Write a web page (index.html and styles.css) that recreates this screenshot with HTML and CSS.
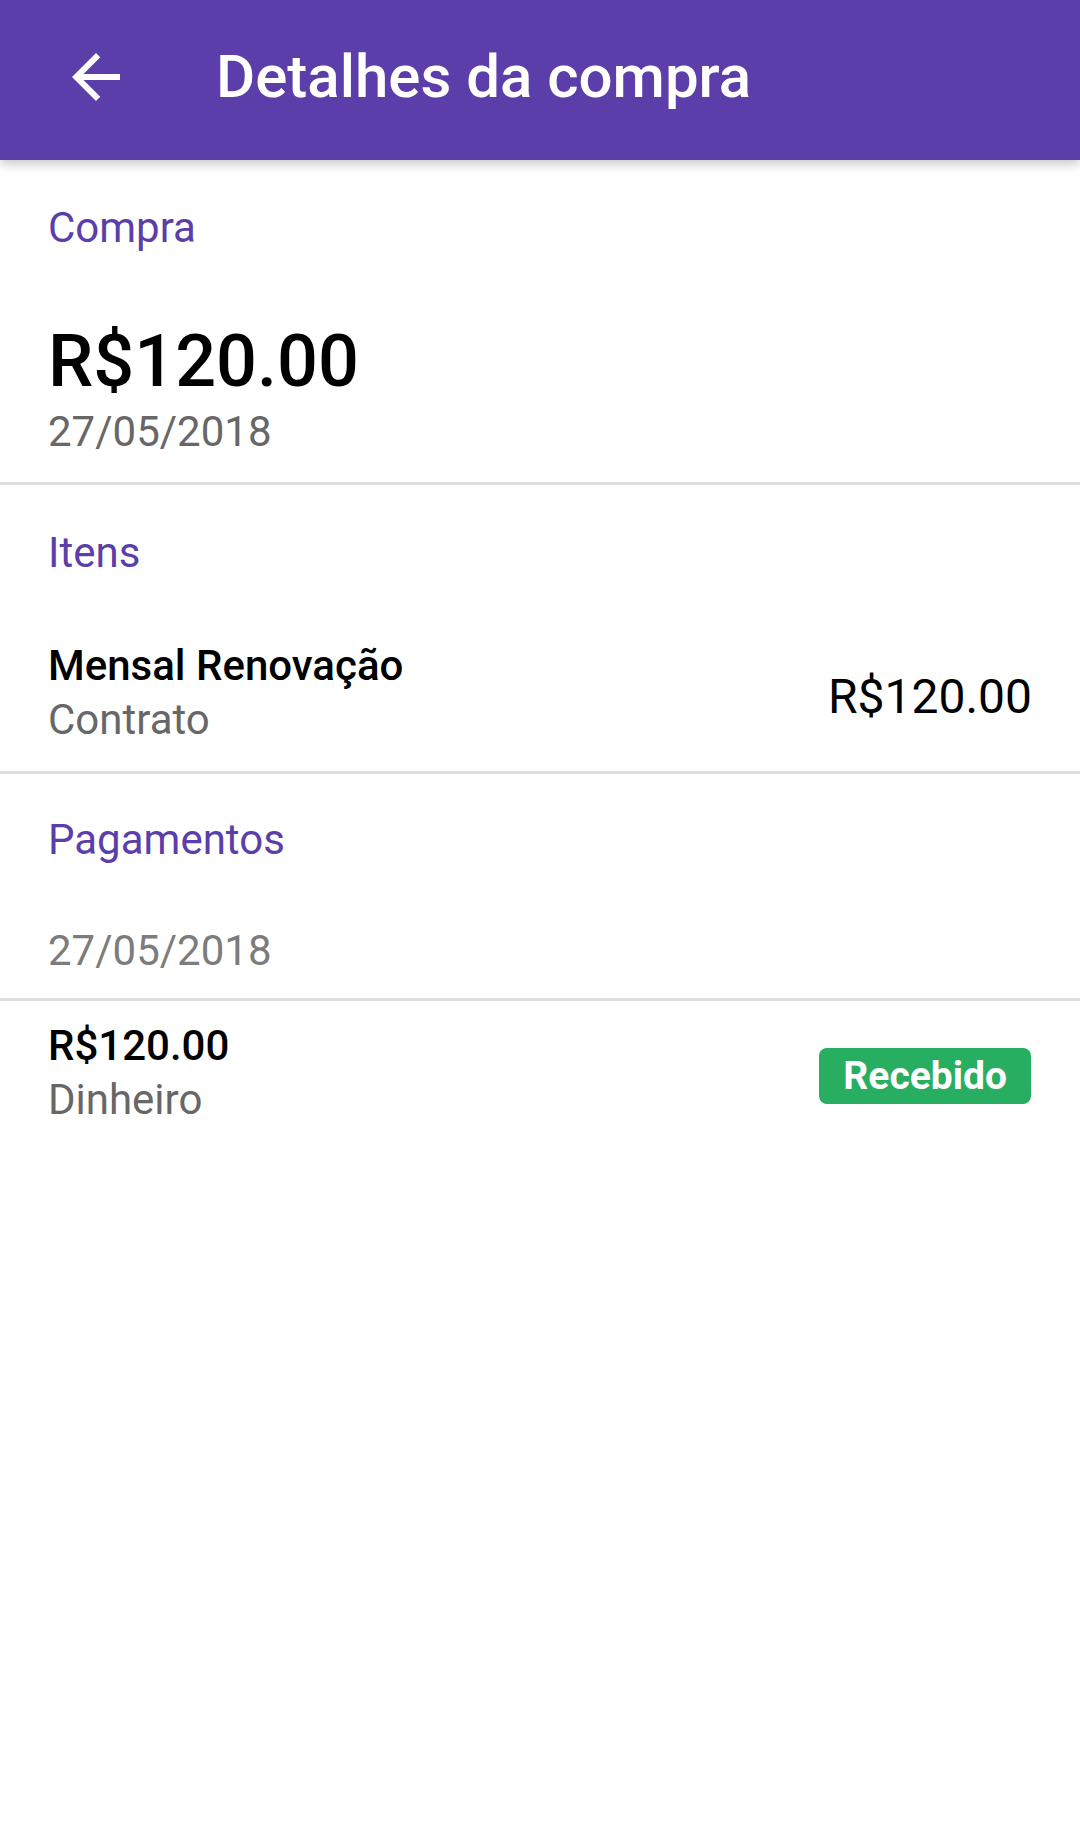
FILE: index.html
```html
<!DOCTYPE html>
<html lang="pt">
<head>
    <meta charset="UTF-8">
    <meta name="viewport" content="width=device-width, initial-scale=1.0">
    <title>Detalhes da compra</title>
    <link rel="stylesheet" href="styles.css">
</head>
<body>

    <header class="toolbar">
        <button class="back-btn" aria-label="Voltar">
            <svg viewBox="0 0 24 24" width="72" height="72">
                <path d="M20 11H7.83l5.59-5.59L12 4l-8 8 8 8 1.41-1.41L7.83 13H20v-2z" fill="#fff"/>
            </svg>
        </button>
        <h1 class="toolbar-title">Detalhes da compra</h1>
    </header>

    <!-- Compra -->
    <section class="section section-compra">
        <div class="section-title">Compra</div>
        <div class="total">R$120.00</div>
        <div class="date">27/05/2018</div>
    </section>

    <!-- Itens -->
    <section class="section section-itens">
        <div class="section-title">Itens</div>
        <div class="row item-row">
            <div class="row-info">
                <div class="row-name">Mensal Renovação</div>
                <div class="row-sub">Contrato</div>
            </div>
            <div class="item-price">R$120.00</div>
        </div>
    </section>

    <!-- Pagamentos -->
    <section class="section section-pagamentos">
        <div class="section-title">Pagamentos</div>
        <div class="date date-light">27/05/2018</div>
    </section>

    <div class="row payment-row">
        <div class="row-info">
            <div class="row-name">R$120.00</div>
            <div class="row-sub">Dinheiro</div>
        </div>
        <span class="badge">Recebido</span>
    </div>

</body>
</html>
```

FILE: styles.css
```css
body {
    font-family: Roboto, "Noto Sans", Arial, sans-serif;
    background-color: #fff;
    margin: 0;
    color: #000;
}

.toolbar {
    height: 160px;
    background-color: #5b3ea9;
    display: flex;
    align-items: center;
    padding: 0 0 6px 60px;
    box-sizing: border-box;
    box-shadow: 0px 4px 10px rgba(0, 0, 0, 0.22);
    position: relative;
}

.back-btn {
    width: 72px;
    height: 72px;
    padding: 0;
    border: none;
    background: none;
    display: flex;
    cursor: pointer;
}

.toolbar-title {
    margin: 0 0 0 84px;
    color: #fff;
    font-size: 60px;
    font-weight: 500;
    line-height: 72px;
}

.section {
    padding: 38px 48px 0;
    border-bottom: 3px solid #dedede;
}

.section-compra {
    padding-top: 40px;
    padding-bottom: 22px;
}

.section-title {
    color: #5b3ea9;
    font-size: 42px;
    line-height: 56px;
}

.total {
    margin-top: 64px;
    font-size: 72px;
    font-weight: 500;
    line-height: 84px;
}

.date {
    color: #676767;
    font-size: 42px;
    line-height: 56px;
}

.date-light {
    color: #7c7c7c;
    margin-top: 55px;
    padding-bottom: 19px;
}

.section-itens {
    padding-top: 40px;
    padding-bottom: 24px;
}

.row {
    display: flex;
    align-items: center;
    justify-content: space-between;
}

.item-row {
    margin-top: 58px;
}

.row-name {
    font-size: 42px;
    font-weight: 500;
    line-height: 54px;
}

.row-sub {
    color: #676767;
    font-size: 42px;
    line-height: 54px;
}

.item-price {
    font-size: 48px;
    line-height: 56px;
    padding-top: 8px;
}

.payment-row {
    padding: 18px 49px 0 48px;
}

.badge {
    background-color: #27ae60;
    color: #fff;
    font-size: 39px;
    font-weight: 700;
    line-height: 56px;
    padding: 0 24px;
    border-radius: 8px;
    margin-top: 6px;
}
```
